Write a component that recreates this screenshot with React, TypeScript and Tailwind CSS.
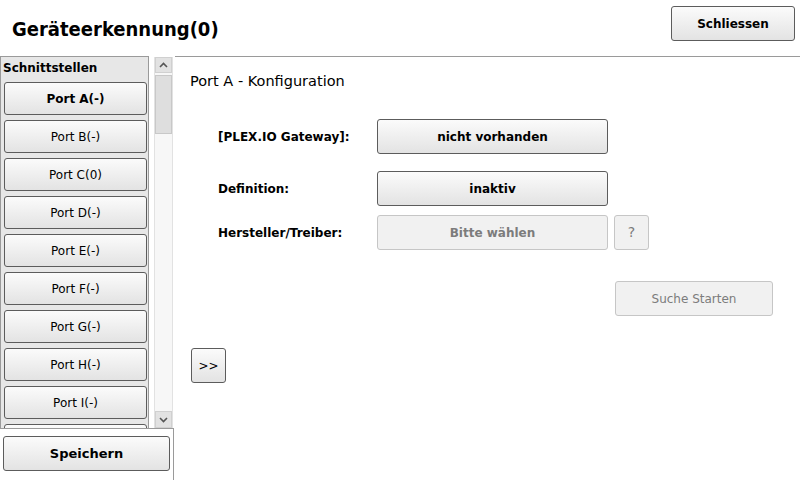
import React from "react";

const btn =
  "flex items-center justify-center border border-[#5c5c5c] rounded-[3px] bg-linear-to-b from-[#fbfbfb] to-[#e3e3e3] text-black";
const dis =
  "flex items-center justify-center border border-[#c6c6c6] rounded-[3px] bg-[#f1f1f1] text-[#7c7c7c]";

const ports = ["A(-)", "B(-)", "C(0)", "D(-)", "E(-)", "F(-)", "G(-)", "H(-)", "I(-)", ""];

export default function App() {
  return (
    <div className="w-[800px] h-[480px] bg-white overflow-hidden flex flex-col font-['DejaVu_Sans',sans-serif] text-black">
      {/* header */}
      <div className="h-[56px] flex items-start justify-between shrink-0">
        <div className="pl-[12px] pt-[16px] text-[20px] leading-[26px] font-bold font-['DejaVu_Sans_Condensed','DejaVu_Sans',sans-serif]">
          Geräteerkennung(0)
        </div>
        <button className={`${btn} mt-[6px] mr-[5px] w-[124px] h-[35px] text-[12px] font-bold`}>
          Schliessen
        </button>
      </div>
      {/* body */}
      <div className="flex flex-1 min-h-0">
        {/* left column */}
        <div className="w-[174px] flex flex-col shrink-0">
          <div className="flex h-[372px] shrink-0">
            <div className="w-[149px] border-t border-l border-r border-[#9a9a9a] bg-[#e7e7e7] overflow-hidden flex flex-col">
              <div className="h-[25px] shrink-0 pl-[2px] pt-[3px] text-[12px] font-bold leading-[16px]">
                Schnittstellen
              </div>
              <div className="flex flex-col gap-[5px] pl-[3px]">
                {ports.map((p, i) => (
                  <button
                    key={i}
                    className={`${btn} w-[143px] h-[33px] shrink-0 text-[12px] ${i === 0 ? "font-bold" : ""}`}
                  >
                    {p ? `Port ${p}` : ""}
                  </button>
                ))}
              </div>
            </div>
            {/* scrollbar */}
            <div className="ml-[5px] mt-[1px] w-[19px] h-[371px] bg-[#f7f7f7] border-l border-r border-[#e2e2e2] flex flex-col">
              <div className="h-[16px] bg-[#e2e2e2] border border-[#d0d0d0] flex items-center justify-center">
                <svg width="9" height="6" viewBox="0 0 9 6">
                  <path d="M1 5 L4.5 1.5 L8 5" stroke="#555" strokeWidth="1.6" fill="none" />
                </svg>
              </div>
              <div className="mt-[2px] h-[59px] bg-[#dedede] border border-[#c8c8c8]" />
              <div className="flex-1" />
              <div className="h-[17px] bg-[#e2e2e2] border border-[#d0d0d0] flex items-center justify-center">
                <svg width="9" height="6" viewBox="0 0 9 6">
                  <path d="M1 1 L4.5 4.5 L8 1" stroke="#555" strokeWidth="1.6" fill="none" />
                </svg>
              </div>
            </div>
          </div>
          <div className="flex-1 border-t border-r border-[#9a9a9a] pl-[3px] pt-[7px]">
            <button className={`${btn} w-[167px] h-[35px] text-[13px] font-bold`}>Speichern</button>
          </div>
        </div>
        {/* right content */}
        <div className="flex-1 ml-[1px] border-t border-[#9a9a9a] pl-[15px] flex flex-col">
          <div className="mt-[15px] text-[14.5px] leading-[18px]">Port A - Konfiguration</div>
          <div className="mt-[29px] pl-[28px] flex flex-col">
            <div className="flex items-center h-[35px]">
              <div className="w-[159px] text-[12px] font-bold">[PLEX.IO Gateway]:</div>
              <button className={`${btn} w-[231px] h-[35px] text-[12px] font-bold`}>nicht vorhanden</button>
            </div>
            <div className="flex items-center h-[35px] mt-[17px]">
              <div className="w-[159px] text-[12px] font-bold">Definition:</div>
              <button className={`${btn} w-[231px] h-[35px] text-[12px] font-bold`}>inaktiv</button>
            </div>
            <div className="flex items-center h-[35px] mt-[9px]">
              <div className="w-[159px] text-[12px] font-bold">Hersteller/Treiber:</div>
              <button className={`${dis} w-[231px] h-[35px] text-[12px] font-bold`}>Bitte wählen</button>
              <button className={`${dis} ml-[6px] w-[35px] h-[35px] text-[14px]`}>?</button>
            </div>
          </div>
          <div className="mt-[31px] flex justify-end pr-[27px]">
            <button className={`${dis} w-[158px] h-[35px] text-[12px]`}>Suche Starten</button>
          </div>
          <div className="mt-[32px] pl-[1px]">
            <button className={`${btn} w-[35px] h-[35px] text-[12px]`}>&gt;&gt;</button>
          </div>
        </div>
      </div>
    </div>
  );
}
